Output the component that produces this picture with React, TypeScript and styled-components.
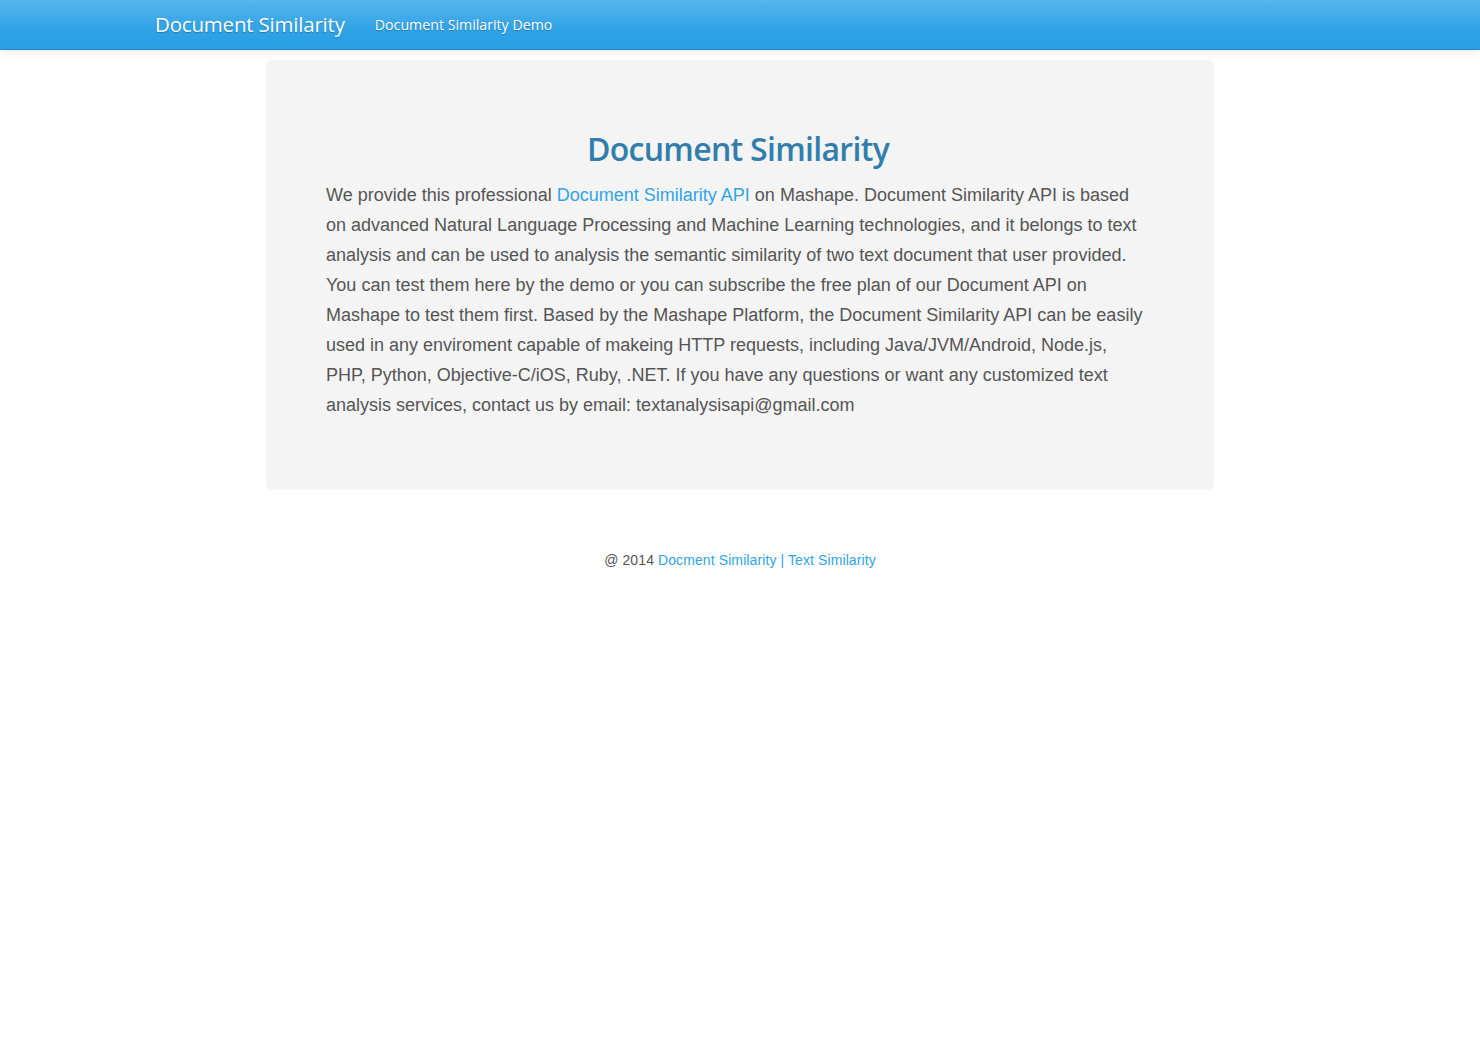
import React from "react";
import styled, { createGlobalStyle } from "styled-components";

const Global = createGlobalStyle`
  html, body { margin: 0; padding: 0; background: #ffffff; }
  body {
    font-family: "Liberation Sans", Arial, sans-serif;
    font-size: 14px;
    line-height: 20px;
    color: #555555;
  }
  a { color: #2fa4e7; text-decoration: none; }
`;

const Navbar = styled.header`
  height: 50px;
  background-image: linear-gradient(to bottom, #56b5ec, #30a3e6 60%, #2a9fe5);
  border-bottom: 1px solid #178acc;
  box-shadow: 0 1px 10px rgba(0, 0, 0, 0.1);
  box-sizing: border-box;
`;

const NavInner = styled.div`
  width: 1170px;
  margin: 0 auto;
  height: 100%;
  display: flex;
  align-items: center;
`;

const Brand = styled.a`
  font-family: "Open Sans", "Noto Sans", sans-serif;
  font-size: 20.5px;
  color: #ffffff;
  letter-spacing: -0.2px;
  text-shadow: 0 1px 1px rgba(0, 0, 0, 0.25);
  margin-top: -2px;
  margin-right: 30px;
`;

const NavLink = styled.a`
  font-family: "Open Sans", "Noto Sans", sans-serif;
  font-size: 14.2px;
  color: #ffffff;
  text-shadow: 0 1px 1px rgba(0, 0, 0, 0.25);
  margin-top: 0;
`;

const Main = styled.main`
  width: 948px;
  margin: 10px auto 0;
`;

const Hero = styled.section`
  background: #f4f4f4;
  border-radius: 6px;
  padding: 61px 64px 60px 60px;
  margin-bottom: 50px;
`;

const Title = styled.h1`
  font-family: "Open Sans", "Noto Sans", sans-serif;
  font-weight: 600;
  font-size: 32px;
  letter-spacing: -0.7px;
  line-height: 40px;
  color: #317eac;
  text-align: center;
  margin: 8px 0 10px;
`;

const Lead = styled.p`
  font-size: 18px;
  line-height: 30px;
  margin: 0 0 10px;
  padding-top: 1px;
  color: #555555;
`;

const Footer = styled.footer`
  text-align: center;
  font-size: 14px;
  letter-spacing: 0.1px;
  line-height: 20px;
  padding-top: 10px;
  color: #555555;
`;

export default function App() {
  return (
    <>
      <Global />
      <Navbar>
        <NavInner>
          <Brand href="#">Document Similarity</Brand>
          <NavLink href="#">Document Similarity Demo</NavLink>
        </NavInner>
      </Navbar>
      <Main>
        <Hero>
          <Title>Document Similarity</Title>
          <Lead>
            We provide this professional <a href="#">Document Similarity API</a> on Mashape.
            Document Similarity API is based on advanced Natural Language Processing and Machine
            Learning technologies, and it belongs to text analysis and can be used to analysis the
            semantic similarity of two text document that user provided. You can test them here by
            the demo or you can subscribe the free plan of our Document API on Mashape to test them
            first. Based by the Mashape Platform, the Document Similarity API can be easily used in
            any enviroment capable of makeing HTTP requests, including Java/JVM/Android, Node.js,
            PHP, Python, Objective-C/iOS, Ruby, .NET. If you have any questions or want any
            customized text analysis services, contact us by email: textanalysisapi@gmail.com
          </Lead>
        </Hero>
        <Footer>
          @ 2014 <a href="#">Docment Similarity | Text Similarity</a>
        </Footer>
      </Main>
    </>
  );
}
